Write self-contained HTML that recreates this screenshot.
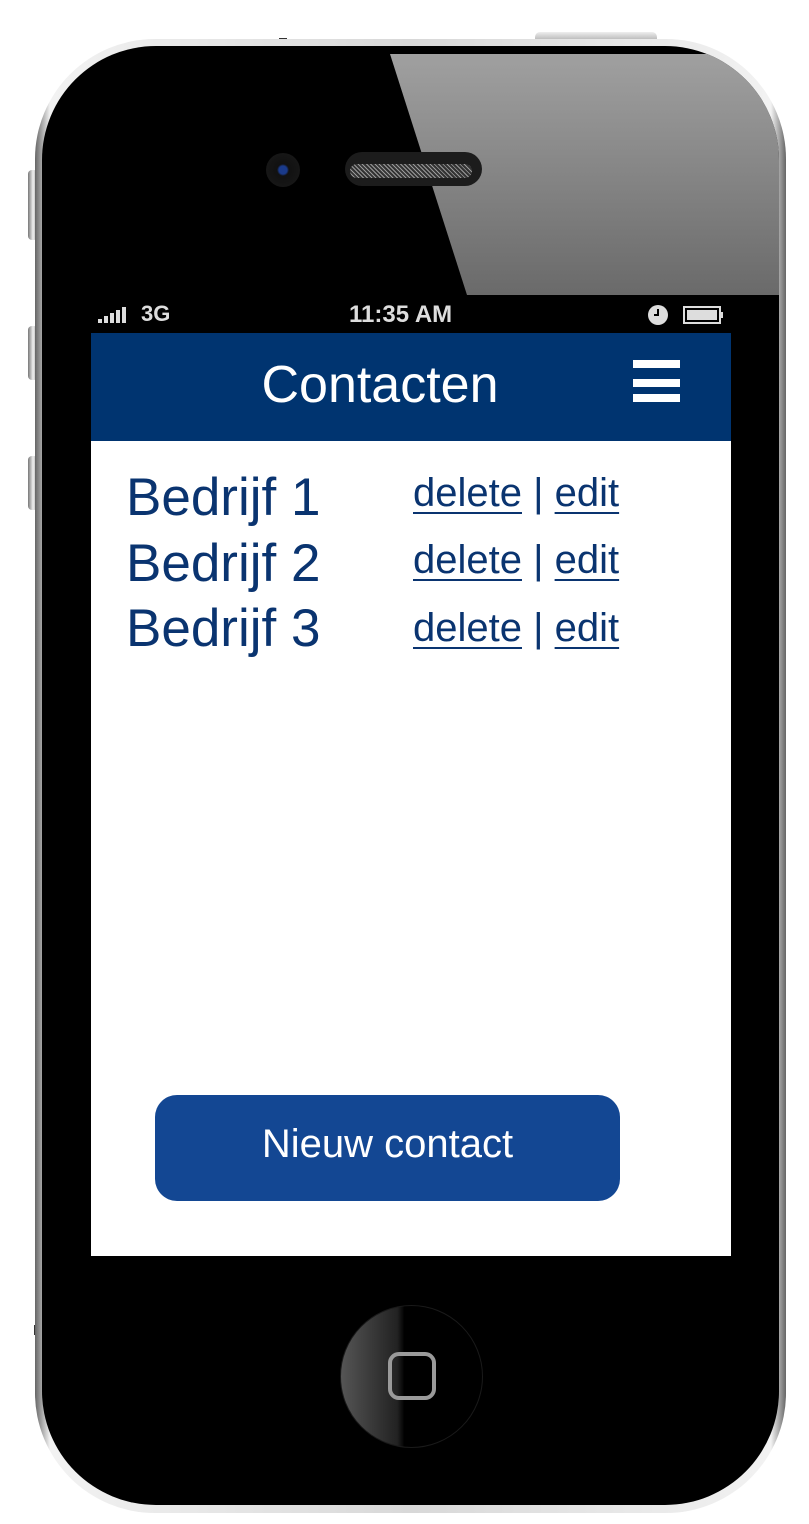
<!DOCTYPE html>
<html><head><meta charset="utf-8"><style>
*{margin:0;padding:0;box-sizing:border-box}
body{width:809px;height:1524px;background:#fff;position:relative;overflow:hidden;font-family:"Liberation Sans",Arial,sans-serif}
.abs{position:absolute}
.outer{left:35px;top:39px;width:751px;height:1474px;border-radius:120px;background:linear-gradient(90deg,#666,#f2f2f2 2%,#d8d8d8 50%,#f2f2f2 98%,#666);}
.inner{left:42px;top:46px;width:737px;height:1459px;border-radius:114px;background:#000;overflow:hidden}
.screen{left:91px;top:295px;width:640px;height:961px;background:#fff}
.status{left:0;top:0;width:640px;height:38px;background:#000;color:#ddd;font-weight:bold}
.header{left:0;top:38px;width:640px;height:108px;background:#003470}
.row{left:35px;font-size:53px;color:#0a3470}
.links{left:322px;font-size:40px;color:#0a3470}
.links u{text-decoration:underline;text-decoration-thickness:2px;text-underline-offset:6px}
.btn{left:64px;top:800px;width:465px;height:106px;border-radius:22px;background:#134793;color:#fff;font-size:40px;text-align:center;line-height:98px}
</style></head><body>
<div class="abs" style="left:535px;top:32px;width:122px;height:10px;border-radius:5px 5px 0 0;background:linear-gradient(#eee,#aaa)"></div>
<div class="abs" style="left:279px;top:38px;width:8px;height:6px;background:#333"></div>
<div class="abs" style="left:28px;top:170px;width:10px;height:70px;border-radius:4px;background:linear-gradient(90deg,#777,#eee,#999)"></div>
<div class="abs" style="left:28px;top:326px;width:10px;height:54px;border-radius:4px;background:linear-gradient(90deg,#777,#eee,#999)"></div>
<div class="abs" style="left:28px;top:456px;width:10px;height:54px;border-radius:4px;background:linear-gradient(90deg,#777,#eee,#999)"></div>
<div class="abs" style="left:34px;top:1325px;width:4px;height:10px;background:#333"></div>
<div class="abs" style="left:781px;top:1325px;width:4px;height:10px;background:#333"></div>
<div class="abs outer"></div>
<div class="abs inner">
  <svg class="abs" style="left:0;top:0" width="737" height="249"><defs><linearGradient id="g" x1="0" y1="0" x2="0" y2="1"><stop offset="0" stop-color="#a0a0a0"/><stop offset="1" stop-color="#6a6a6a"/></linearGradient></defs>
  <polygon points="348,8 737,8 737,249 425,249" fill="url(#g)"/></svg>
</div>
<div class="abs" style="left:266px;top:153px;width:34px;height:34px;border-radius:50%;background:radial-gradient(circle,#1a3a8a 0 4px,#111 6px,#1a1a1a)"></div>
<div class="abs" style="left:345px;top:152px;width:137px;height:34px;border-radius:17px;background:#1c1c1c"></div>
<div class="abs" style="left:350px;top:164px;width:122px;height:14px;border-radius:7px;background:repeating-linear-gradient(45deg,#999 0 1px,#333 1px 3px)"></div>
<div class="abs" style="left:340px;top:1305px;width:143px;height:143px;border-radius:50%;background:linear-gradient(90deg,#555,#222 40%,#000 45%,#000);border:1px solid #1a1a1a"></div>
<div class="abs" style="left:388px;top:1352px;width:48px;height:48px;border-radius:11px;border:4px solid #9a9a9a"></div>
<div class="abs screen">
  <div class="abs status">
    <svg class="abs" style="left:7px;top:11px" width="40" height="18"><rect x="0" y="13" width="4" height="4" fill="#ddd"/><rect x="6" y="10" width="4" height="7" fill="#ddd"/><rect x="12" y="7" width="4" height="10" fill="#ddd"/><rect x="18" y="4" width="4" height="13" fill="#ddd"/><rect x="24" y="1" width="4" height="16" fill="#ddd"/></svg>
    <div class="abs" style="left:50px;top:6px;font-size:22px">3G</div>
    <div class="abs" style="left:258px;top:6px;font-size:24px">11:35 AM</div>
    <svg class="abs" style="left:556px;top:9px" width="80" height="22"><circle cx="11" cy="11" r="10" fill="#ddd"/><path d="M11 5v6h-4" stroke="#000" stroke-width="2" fill="none"/><rect x="37" y="3" width="36" height="16" fill="none" stroke="#ddd" stroke-width="2"/><rect x="40" y="6" width="30" height="10" fill="#ddd"/><rect x="73" y="8" width="3" height="6" fill="#ddd"/></svg>
  </div>
  <div class="abs header">
    <div class="abs" style="left:0;width:578px;text-align:center;top:22px;font-size:52px;color:#fff">Contacten</div>
    <div class="abs" style="left:542px;top:27px;width:47px;height:8px;background:#fff"></div>
    <div class="abs" style="left:542px;top:46px;width:47px;height:8px;background:#fff"></div>
    <div class="abs" style="left:542px;top:61px;width:47px;height:8px;background:#fff"></div>
  </div>
  <div class="abs row" style="top:172px">Bedrijf 1</div>
  <div class="abs row" style="top:238px">Bedrijf 2</div>
  <div class="abs row" style="top:303px">Bedrijf 3</div>
  <div class="abs links" style="top:176px"><u>delete</u> | <u>edit</u></div>
  <div class="abs links" style="top:243px"><u>delete</u> | <u>edit</u></div>
  <div class="abs links" style="top:311px"><u>delete</u> | <u>edit</u></div>
  <div class="abs btn">Nieuw contact</div>
</div>
</body></html>
